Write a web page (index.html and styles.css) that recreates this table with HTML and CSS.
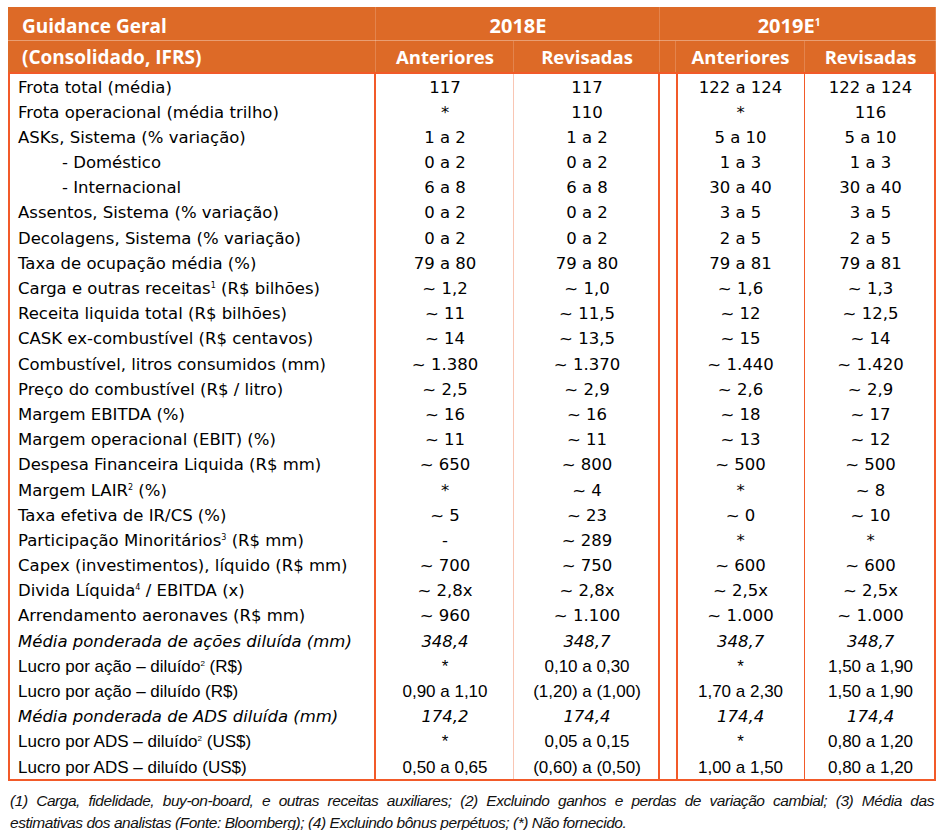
FILE: index.html
```html
<!DOCTYPE html>
<html lang="pt">
<head>
<meta charset="utf-8">
<title>Guidance Geral</title>
<link rel="stylesheet" href="styles.css">
</head>
<body>
<div class="page">
<table class="guide">
<colgroup><col class="w-label"><col class="w-a18"><col class="w-r18"><col class="w-sp"><col class="w-a19"><col class="w-r19"></colgroup>
<thead>
<tr class="h1"><th class="hl hl1">Guidance Geral</th><th colspan="2" class="yr">2018E</th><th colspan="3" class="yr yr19">2019E<sup class="hs">1</sup></th></tr>
<tr class="h2"><th class="hl">(Consolidado, IFRS)</th><th>Anteriores</th><th>Revisadas</th><th class="sp"></th><th>Anteriores</th><th>Revisadas</th></tr>
</thead>
<tbody>
<tr><td class="lab">Frota total (média)</td><td class="a18">117</td><td class="r18">117</td><td class="sp"></td><td class="a19">122 a 124</td><td class="r19">122 a 124</td></tr>
<tr><td class="lab">Frota operacional (média trilho)</td><td class="a18">*</td><td class="r18">110</td><td class="sp"></td><td class="a19">*</td><td class="r19">116</td></tr>
<tr><td class="lab">ASKs, Sistema (% variação)</td><td class="a18">1 a 2</td><td class="r18">1 a 2</td><td class="sp"></td><td class="a19">5 a 10</td><td class="r19">5 a 10</td></tr>
<tr><td class="lab ind">- Doméstico</td><td class="a18">0 a 2</td><td class="r18">0 a 2</td><td class="sp"></td><td class="a19">1 a 3</td><td class="r19">1 a 3</td></tr>
<tr><td class="lab ind">- Internacional</td><td class="a18">6 a 8</td><td class="r18">6 a 8</td><td class="sp"></td><td class="a19">30 a 40</td><td class="r19">30 a 40</td></tr>
<tr><td class="lab">Assentos, Sistema (% variação)</td><td class="a18">0 a 2</td><td class="r18">0 a 2</td><td class="sp"></td><td class="a19">3 a 5</td><td class="r19">3 a 5</td></tr>
<tr><td class="lab">Decolagens, Sistema (% variação)</td><td class="a18">0 a 2</td><td class="r18">0 a 2</td><td class="sp"></td><td class="a19">2 a 5</td><td class="r19">2 a 5</td></tr>
<tr><td class="lab">Taxa de ocupação média (%)</td><td class="a18">79 a 80</td><td class="r18">79 a 80</td><td class="sp"></td><td class="a19">79 a 81</td><td class="r19">79 a 81</td></tr>
<tr><td class="lab">Carga e outras receitas<sup class="fs">1</sup> (R$ bilhões)</td><td class="a18">~ 1,2</td><td class="r18">~ 1,0</td><td class="sp"></td><td class="a19">~ 1,6</td><td class="r19">~ 1,3</td></tr>
<tr><td class="lab">Receita liquida total (R$ bilhões)</td><td class="a18">~ 11</td><td class="r18">~ 11,5</td><td class="sp"></td><td class="a19">~ 12</td><td class="r19">~ 12,5</td></tr>
<tr><td class="lab">CASK ex-combustível (R$ centavos)</td><td class="a18">~ 14</td><td class="r18">~ 13,5</td><td class="sp"></td><td class="a19">~ 15</td><td class="r19">~ 14</td></tr>
<tr><td class="lab">Combustível, litros consumidos (mm)</td><td class="a18">~ 1.380</td><td class="r18">~ 1.370</td><td class="sp"></td><td class="a19">~ 1.440</td><td class="r19">~ 1.420</td></tr>
<tr><td class="lab">Preço do combustível (R$ / litro)</td><td class="a18">~ 2,5</td><td class="r18">~ 2,9</td><td class="sp"></td><td class="a19">~ 2,6</td><td class="r19">~ 2,9</td></tr>
<tr><td class="lab">Margem EBITDA (%)</td><td class="a18">~ 16</td><td class="r18">~ 16</td><td class="sp"></td><td class="a19">~ 18</td><td class="r19">~ 17</td></tr>
<tr><td class="lab">Margem operacional (EBIT) (%)</td><td class="a18">~ 11</td><td class="r18">~ 11</td><td class="sp"></td><td class="a19">~ 13</td><td class="r19">~ 12</td></tr>
<tr><td class="lab">Despesa Financeira Liquida (R$ mm)</td><td class="a18">~ 650</td><td class="r18">~ 800</td><td class="sp"></td><td class="a19">~ 500</td><td class="r19">~ 500</td></tr>
<tr><td class="lab">Margem LAIR<sup class="fs">2</sup> (%)</td><td class="a18">*</td><td class="r18">~ 4</td><td class="sp"></td><td class="a19">*</td><td class="r19">~ 8</td></tr>
<tr><td class="lab">Taxa efetiva de IR/CS (%)</td><td class="a18">~ 5</td><td class="r18">~ 23</td><td class="sp"></td><td class="a19">~ 0</td><td class="r19">~ 10</td></tr>
<tr><td class="lab">Participação Minoritários<sup class="fs">3</sup> (R$ mm)</td><td class="a18">-</td><td class="r18">~ 289</td><td class="sp"></td><td class="a19">*</td><td class="r19">*</td></tr>
<tr><td class="lab">Capex (investimentos), líquido (R$ mm)</td><td class="a18">~ 700</td><td class="r18">~ 750</td><td class="sp"></td><td class="a19">~ 600</td><td class="r19">~ 600</td></tr>
<tr><td class="lab">Divida Líquida<sup class="fs">4</sup> / EBITDA (x)</td><td class="a18">~ 2,8x</td><td class="r18">~ 2,8x</td><td class="sp"></td><td class="a19">~ 2,5x</td><td class="r19">~ 2,5x</td></tr>
<tr><td class="lab">Arrendamento aeronaves (R$ mm)</td><td class="a18">~ 960</td><td class="r18">~ 1.100</td><td class="sp"></td><td class="a19">~ 1.000</td><td class="r19">~ 1.000</td></tr>
<tr class="it"><td class="lab">Média ponderada de ações diluída (mm)</td><td class="a18">348,4</td><td class="r18">348,7</td><td class="sp"></td><td class="a19">348,7</td><td class="r19">348,7</td></tr>
<tr class="cal"><td class="lab">Lucro por ação – diluído<sup class="fs">2</sup> (R$)</td><td class="a18">*</td><td class="r18">0,10 a 0,30</td><td class="sp"></td><td class="a19">*</td><td class="r19">1,50 a 1,90</td></tr>
<tr class="cal"><td class="lab">Lucro por ação – diluído (R$)</td><td class="a18">0,90 a 1,10</td><td class="r18">(1,20) a (1,00)</td><td class="sp"></td><td class="a19">1,70 a 2,30</td><td class="r19">1,50 a 1,90</td></tr>
<tr class="it"><td class="lab">Média ponderada de ADS diluída (mm)</td><td class="a18">174,2</td><td class="r18">174,4</td><td class="sp"></td><td class="a19">174,4</td><td class="r19">174,4</td></tr>
<tr class="cal"><td class="lab">Lucro por ADS – diluído<sup class="fs">2</sup> (US$)</td><td class="a18">*</td><td class="r18">0,05 a 0,15</td><td class="sp"></td><td class="a19">*</td><td class="r19">0,80 a 1,20</td></tr>
<tr class="cal"><td class="lab">Lucro por ADS – diluído (US$)</td><td class="a18">0,50 a 0,65</td><td class="r18">(0,60) a (0,50)</td><td class="sp"></td><td class="a19">1,00 a 1,50</td><td class="r19">0,80 a 1,20</td></tr>
</tbody>
</table>
<p class="notes"><span class="l1">(1) Carga, fidelidade, buy-on-board, e outras receitas auxiliares; (2) Excluindo ganhos e perdas de variação cambial; (3) Média das</span>estimativas dos analistas (Fonte: Bloomberg); (4) Excluindo bônus perpétuos; (*) Não fornecido.</p>
</div>
</body>
</html>
```
FILE: styles.css
```css
body {
  margin: 0;
  background: #fff;
  color: #000;
  font-family: "DejaVu Sans", "Liberation Sans", sans-serif;
}

.page {
  padding: 7px 4px 0 8px;
}

.guide {
  width: 928px;
  table-layout: fixed;
  border-collapse: separate;
  border-spacing: 0;
  border-bottom: 2px solid #f25a29;
}

.w-label { width: 368px; }
.w-a18 { width: 138px; }
.w-r18 { width: 146px; }
.w-sp { width: 16px; }
.w-a19 { width: 129px; }
.w-r19 { width: 131px; }

.guide th {
  background: #dd6a27;
  color: #fff;
  font-family: "Open Sans", sans-serif;
  font-weight: 700;
  font-size: 18.5px;
  padding: 0;
  text-align: center;
  white-space: nowrap;
  line-height: 24px;
}

.h1 th {
  height: 31px;
  padding-top: 3px;
  box-shadow: inset 0 -1px rgba(255, 255, 255, 0.35), inset -1px 0 rgba(255, 255, 255, 0.18);
}

.guide .h1 th.yr {
  font-size: 20px;
}

.guide .h1 th.yr19 {
  padding-right: 18px;
}

.h2 th {
  height: 31px;
  padding-bottom: 2px;
  box-shadow: inset 0 -2px #f25a29, inset -1px 0 rgba(255, 255, 255, 0.18);
}

.guide th.hl {
  text-align: left;
  padding-left: 14px;
  font-size: 19px;
}

.hs {
  font-size: 10px;
  vertical-align: 7px;
  line-height: 0;
}

.guide tbody tr {
  height: 25.2px;
}

.guide td {
  padding: 2.5px 0 0;
  font-size: 16.5px;
  line-height: 22px;
  vertical-align: top;
  text-align: center;
  white-space: nowrap;
}

.guide td.lab {
  text-align: left;
  padding-left: 10px;
  box-shadow: inset 2px 0 #f25a29, inset -2px 0 #f25a29;
}

.guide td.ind {
  padding-left: 54px;
}

.guide td.a18 {
  box-shadow: inset -1px 0 #f9c6b4;
}

.guide td.r18 {
  box-shadow: inset -2px 0 #f25a29;
}

.guide td.a19 {
  box-shadow: inset 2px 0 #f25a29, inset -1px 0 #f25a29;
}

.guide td.r19 {
  box-shadow: inset -2px 0 #f25a29;
}

.fs {
  font-size: 8px;
  vertical-align: 6px;
  line-height: 0;
}

.it td {
  font-style: italic;
}

.cal td {
  font-family: "Liberation Sans Narrow", "Liberation Sans", sans-serif;
  font-size: 17px;
}

.notes {
  width: 924px;
  margin: 9px 0 0 2px;
  font-family: "Liberation Sans", sans-serif;
  font-style: italic;
  font-size: 15.5px;
  letter-spacing: -0.45px;
  line-height: 22px;
  color: #111;
}

.notes .l1 {
  display: block;
  text-align: justify;
  text-align-last: justify;
}
```
